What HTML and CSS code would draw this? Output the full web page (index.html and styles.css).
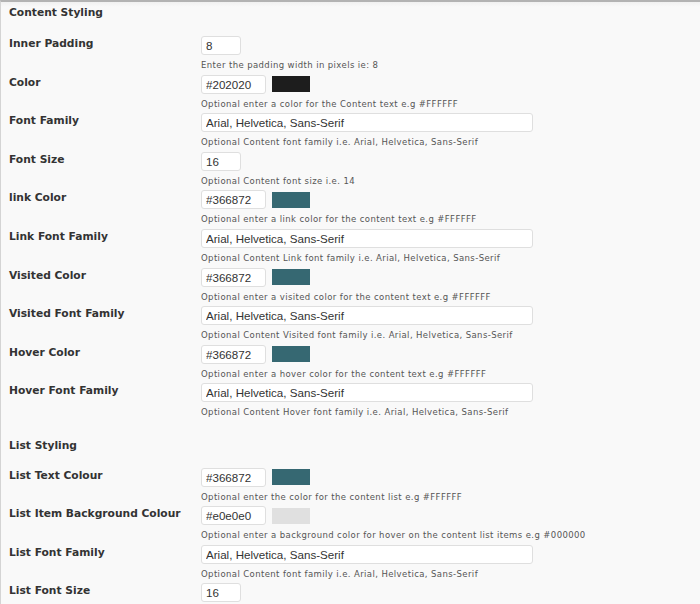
FILE: index.html
```html
<!DOCTYPE html>
<html>
<head>
<meta charset="utf-8">
<link rel="stylesheet" href="styles.css">
</head>
<body>
<div class="page">
  <div class="heading first">Content Styling</div>

  <div class="row">
    <div class="label">Inner Padding</div>
    <div class="field">
      <div class="controls"><input class="inp small" value="8"></div>
      <div class="desc">Enter the padding width in pixels ie: 8</div>
    </div>
  </div>

  <div class="row">
    <div class="label">Color</div>
    <div class="field">
      <div class="controls"><input class="inp color" value="#202020"><span class="swatch dark"></span></div>
      <div class="desc">Optional enter a color for the Content text e.g #FFFFFF</div>
    </div>
  </div>

  <div class="row">
    <div class="label">Font Family</div>
    <div class="field">
      <div class="controls"><input class="inp wide" value="Arial, Helvetica, Sans-Serif"></div>
      <div class="desc">Optional Content font family i.e. Arial, Helvetica, Sans-Serif</div>
    </div>
  </div>

  <div class="row">
    <div class="label">Font Size</div>
    <div class="field">
      <div class="controls"><input class="inp small" value="16"></div>
      <div class="desc">Optional Content font size i.e. 14</div>
    </div>
  </div>

  <div class="row">
    <div class="label">link Color</div>
    <div class="field">
      <div class="controls"><input class="inp color" value="#366872"><span class="swatch teal"></span></div>
      <div class="desc">Optional enter a link color for the content text e.g #FFFFFF</div>
    </div>
  </div>

  <div class="row">
    <div class="label">Link Font Family</div>
    <div class="field">
      <div class="controls"><input class="inp wide" value="Arial, Helvetica, Sans-Serif"></div>
      <div class="desc">Optional Content Link font family i.e. Arial, Helvetica, Sans-Serif</div>
    </div>
  </div>

  <div class="row">
    <div class="label">Visited Color</div>
    <div class="field">
      <div class="controls"><input class="inp color" value="#366872"><span class="swatch teal"></span></div>
      <div class="desc">Optional enter a visited color for the content text e.g #FFFFFF</div>
    </div>
  </div>

  <div class="row">
    <div class="label">Visited Font Family</div>
    <div class="field">
      <div class="controls"><input class="inp wide" value="Arial, Helvetica, Sans-Serif"></div>
      <div class="desc">Optional Content Visited font family i.e. Arial, Helvetica, Sans-Serif</div>
    </div>
  </div>

  <div class="row">
    <div class="label">Hover Color</div>
    <div class="field">
      <div class="controls"><input class="inp color" value="#366872"><span class="swatch teal"></span></div>
      <div class="desc">Optional enter a hover color for the content text e.g #FFFFFF</div>
    </div>
  </div>

  <div class="row">
    <div class="label">Hover Font Family</div>
    <div class="field">
      <div class="controls"><input class="inp wide" value="Arial, Helvetica, Sans-Serif"></div>
      <div class="desc">Optional Content Hover font family i.e. Arial, Helvetica, Sans-Serif</div>
    </div>
  </div>

  <div class="heading second">List Styling</div>

  <div class="row">
    <div class="label">List Text Colour</div>
    <div class="field">
      <div class="controls"><input class="inp color" value="#366872"><span class="swatch teal"></span></div>
      <div class="desc">Optional enter the color for the content list e.g #FFFFFF</div>
    </div>
  </div>

  <div class="row">
    <div class="label">List Item Background Colour</div>
    <div class="field">
      <div class="controls"><input class="inp color" value="#e0e0e0"><span class="swatch light"></span></div>
      <div class="desc">Optional enter a background color for hover on the content list items e.g #000000</div>
    </div>
  </div>

  <div class="row">
    <div class="label">List Font Family</div>
    <div class="field">
      <div class="controls"><input class="inp wide" value="Arial, Helvetica, Sans-Serif"></div>
      <div class="desc">Optional Content font family i.e. Arial, Helvetica, Sans-Serif</div>
    </div>
  </div>

  <div class="row">
    <div class="label">List Font Size</div>
    <div class="field">
      <div class="controls"><input class="inp small" value="16"></div>
      <div class="desc">Optional Content font size i.e. 14</div>
    </div>
  </div>
</div>
</body>
</html>
```

FILE: styles.css
```css
html, body {
  margin: 0;
  padding: 0;
  background: #f9f9f9;
}

body {
  height: 604px;
  overflow: hidden;
}

.page {
  border-top: 2px solid #b3b3b3;
  border-left: 1px solid #d4d4d4;
  background: linear-gradient(#f1f1f1, #f9f9f9 5px);
  padding-left: 8px;
  height: 700px;
  font-family: "DejaVu Sans", Verdana, sans-serif;
}

.heading {
  font-size: 10.7px;
  font-weight: bold;
  line-height: 14px;
  color: #333;
}

.heading.first {
  padding-top: 4px;
  padding-bottom: 16px;
}

.heading.second {
  padding-top: 16.6px;
  padding-bottom: 15.1px;
}

.row {
  display: grid;
  grid-template-columns: 192px 1fr;
  height: 38.6px;
}

.label {
  font-size: 10.7px;
  font-weight: bold;
  line-height: 14px;
  padding-top: 1px;
  color: #333;
}

.list .label {
  padding-top: 2px;
}

.controls {
  display: flex;
  align-items: center;
  gap: 6px;
  height: 19px;
}

.inp {
  box-sizing: border-box;
  height: 19px;
  margin: 0;
  padding: 0 4px;
  border: 1px solid #dfdfdf;
  border-radius: 3px;
  background: #fff;
  font-family: "Liberation Sans", Arial, sans-serif;
  font-size: 11.6px;
  color: #333;
  outline: none;
}

.inp.small { width: 40px; }
.inp.color { width: 65px; }
.inp.wide { width: 332px; }

.swatch {
  display: block;
  width: 38px;
  height: 16px;
}

.swatch.dark { background: #1d1d1d; }
.swatch.teal { background: #366872; }
.swatch.light { background: #e0e0e0; }

.desc {
  font-size: 8.5px;
  letter-spacing: 0.4px;
  line-height: 18px;
  padding-top: 1px;
  color: #555;
  white-space: nowrap;
}
```
